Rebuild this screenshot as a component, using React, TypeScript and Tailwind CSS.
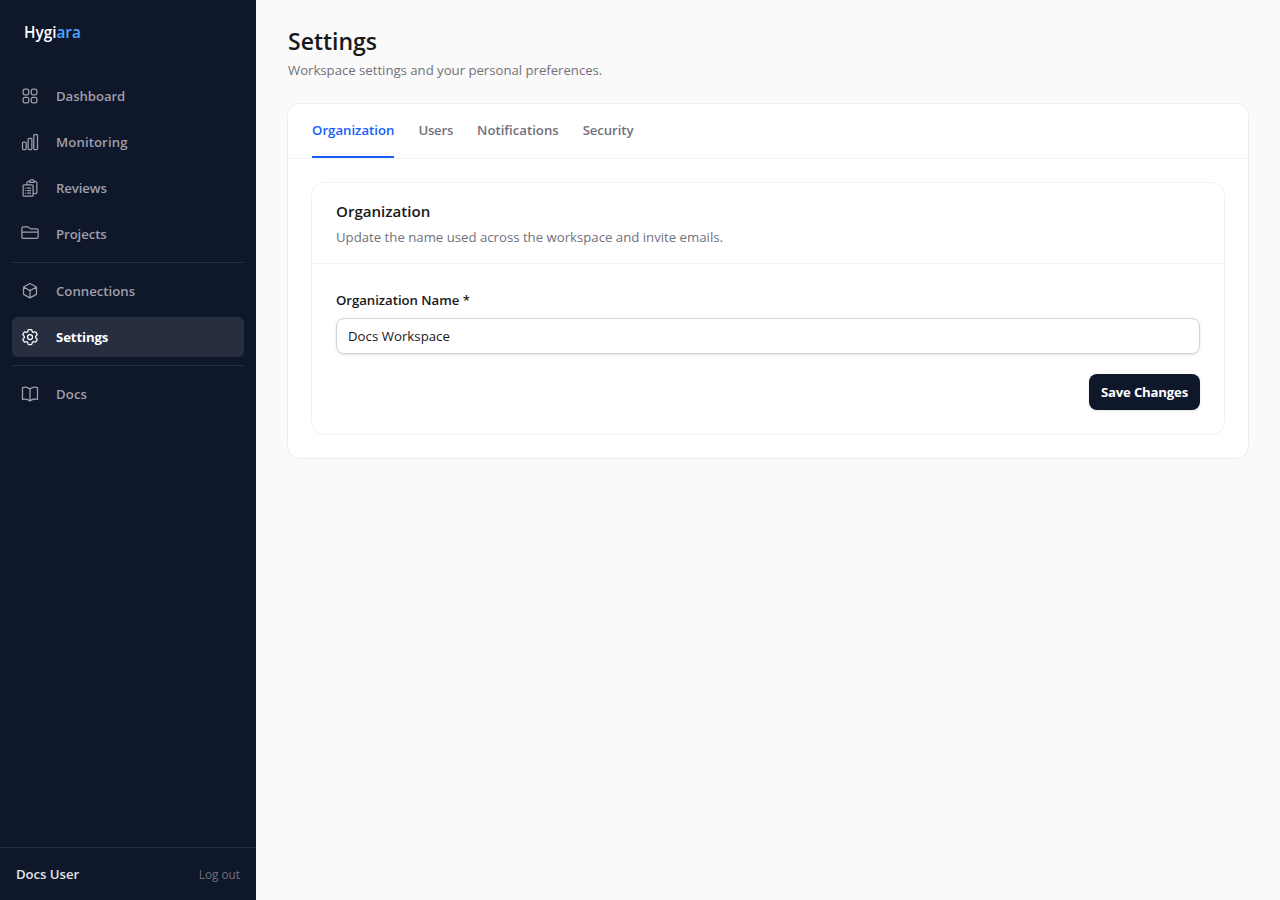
import React from 'react';
import {
  HiOutlineSquares2X2,
  HiOutlineChartBar,
  HiOutlineClipboardDocumentList,
  HiOutlineCog6Tooth,
  HiOutlineBookOpen,
} from 'react-icons/hi2';

function FolderIcon({ className }: { className?: string }) {
  return (
    <svg viewBox="0 0 24 24" fill="none" stroke="currentColor" strokeWidth={1.5} strokeLinecap="round" strokeLinejoin="round" className={className}>
      <path d="M2.25 9.75h19.5M2.25 5.25c0-1 .7-1.75 1.7-1.75h5.4c.5 0 .9.15 1.2.5l1.3 1.3c.3.3.7.5 1.2.5h7c1 0 1.7.75 1.7 1.7v8c0 1-.7 1.75-1.7 1.75H3.95c-1 0-1.7-.75-1.7-1.75V5.25Z" />
    </svg>
  );
}

function CubeIcon({ className }: { className?: string }) {
  return (
    <svg viewBox="0 0 24 24" fill="none" stroke="currentColor" strokeWidth={1.5} strokeLinecap="round" strokeLinejoin="round" className={className}>
      <path d="m12 3 7.75 4.25v8.75L12 20.25 4.25 16V7.25L12 3ZM4.25 7.25 12 11.6l7.75-4.35M12 11.6v8.65" />
    </svg>
  );
}

const navGroups = [
  [
    { label: 'Dashboard', icon: HiOutlineSquares2X2, tracking: 'tracking-[-0.08px]' },
    { label: 'Monitoring', icon: HiOutlineChartBar, tracking: 'tracking-[0.1px]' },
    { label: 'Reviews', icon: HiOutlineClipboardDocumentList, tracking: 'tracking-[-0.1px]' },
    { label: 'Projects', icon: FolderIcon, tracking: 'tracking-[-0.08px]' },
  ],
  [
    { label: 'Connections', icon: CubeIcon, tracking: 'tracking-normal' },
    { label: 'Settings', icon: HiOutlineCog6Tooth, tracking: 'tracking-[-0.12px]' },
  ],
  [{ label: 'Docs', icon: HiOutlineBookOpen, tracking: 'tracking-[0.1px]' }],
];

const tabs = [
  { label: 'Organization', tracking: 'tracking-normal' },
  { label: 'Users', tracking: 'tracking-[-0.25px]' },
  { label: 'Notifications', tracking: 'tracking-normal' },
  { label: 'Security', tracking: 'tracking-[-0.1px]' },
];

export default function App() {
  return (
    <div className="flex h-screen bg-[#fafafa] font-['Open_Sans',sans-serif] text-[13.2px] leading-5 text-zinc-900">
      <aside className="flex w-64 shrink-0 flex-col bg-slate-900">
        <div className="px-6 pt-5 text-[15.3px] leading-6 font-semibold text-white">
          Hygi<span className="text-blue-400">ara</span>
        </div>
        <nav className="mt-8 flex-1 px-3">
          {navGroups.map((group, i) => (
            <div key={i} className={i > 0 ? 'mt-2 space-y-1.5 border-t border-white/10 pt-2' : 'space-y-1.5'}>
              {group.map((item) => (
                <a
                  key={item.label}
                  className={
                    item.label === 'Settings'
                      ? 'flex h-10 items-center gap-4 rounded-md bg-white/10 px-2 font-bold text-white'
                      : 'flex h-10 items-center gap-4 rounded-md px-2 font-semibold text-zinc-400'
                  }
                >
                  <item.icon className="size-5" />
                  <span className={item.tracking}>{item.label}</span>
                </a>
              ))}
            </div>
          ))}
        </nav>
        <div className="flex h-[53px] items-center justify-between border-t border-white/10 px-4">
          <span className="font-semibold tracking-[-0.05px] text-zinc-200">Docs User</span>
          <button className="text-[11.8px] text-zinc-500">Log out</button>
        </div>
      </aside>

      <main className="flex-1 px-8 pt-6">
        <h1 className="mb-0.5 text-[23px] leading-[34px] font-semibold">Settings</h1>
        <p className="tracking-[-0.02px] text-zinc-500">Workspace settings and your personal preferences.</p>

        <div className="mt-6 rounded-xl bg-white ring-1 ring-zinc-950/5">
          <div className="flex gap-6 border-b border-zinc-100 px-6">
            {tabs.map((tab) => (
              <button
                key={tab.label}
                className={
                  tab.label === 'Organization'
                    ? 'h-[54px] border-b-2 border-blue-600 font-semibold text-blue-600'
                    : 'h-[54px] border-b-2 border-transparent font-semibold text-zinc-500'
                }
              >
                <span className={tab.tracking}>{tab.label}</span>
              </button>
            ))}
          </div>
          <div className="p-6">
            <section className="rounded-xl ring-1 ring-zinc-950/5">
              <div className="border-b border-zinc-100 px-6 py-4">
                <h2 className="text-[15.1px] leading-6 font-semibold">Organization</h2>
                <p className="mt-1 text-zinc-500">Update the name used across the workspace and invite emails.</p>
              </div>
              <div className="px-6 pt-[26px] pb-6">
                <label className="block font-semibold tracking-[-0.04px]">Organization Name *</label>
                <input
                  className="mt-2 h-9 w-full rounded-lg border border-zinc-300 px-[11px] tracking-[0.04px] shadow-sm"
                  defaultValue="Docs Workspace"
                />
                <div className="mt-5 flex justify-end">
                  <button className="h-9 w-[111px] rounded-lg bg-slate-900 font-bold tracking-[-0.2px] text-white shadow-sm">
                    Save Changes
                  </button>
                </div>
              </div>
            </section>
          </div>
        </div>
      </main>
    </div>
  );
}
